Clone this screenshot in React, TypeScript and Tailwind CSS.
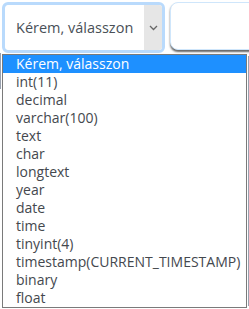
const options = [
  "Kérem, válasszon",
  "int(11)",
  "decimal",
  "varchar(100)",
  "text",
  "char",
  "longtext",
  "year",
  "date",
  "time",
  "tinyint(4)",
  "timestamp(CURRENT_TIMESTAMP)",
  "binary",
  "float",
];

export default function App() {
  return (
    <div className="relative w-[249px] h-[309px] bg-white overflow-hidden font-['Open_Sans',sans-serif]">
      {/* háttér elemek */}
      <div className="absolute left-0 top-[53px] w-[3px] h-[36px] border-l border-gray-400" />
      <div className="absolute right-0 top-[56px] w-[1px] h-[250px] bg-gray-400" />

      <div className="flex items-start gap-[5px] pt-[2px] pl-[2px]">
        {/* select */}
        <div className="flex w-[163px] h-[51px] rounded-[6px] border-[3px] border-[#b9dafc] bg-white overflow-hidden">
          <div className="flex-1 flex items-center pl-[11px] text-[14.5px] text-[#495057]">
            Kérem, válasszon
          </div>
          <div className="w-[18px] flex items-center justify-center bg-[#e6e6e6]">
            <svg width="9" height="6" viewBox="0 0 9 6" fill="none">
              <path d="M1 1l3.5 3.5L8 1" stroke="#666" strokeWidth="1.3" />
            </svg>
          </div>
        </div>
        {/* jobb oldali doboz */}
        <div className="flex-1 h-[48px] -mr-[20px] rounded-[8px] bg-white border border-[#cfe6fb] shadow-[0_2px_2px_rgba(0,0,0,0.6)]" />
      </div>

      {/* legördülő lista */}
      <ul className="absolute left-[2px] top-[54px] w-[245px] border border-[#7a7a7a] bg-white text-[14px] leading-[18px] text-[#44484e]">
        {options.map((o, i) => (
          <li
            key={o}
            className={
              i === 0
                ? "h-[18px] pl-[13px] bg-[#1e90ff] text-white font-medium whitespace-nowrap"
                : "h-[18px] pl-[13px] whitespace-nowrap"
            }
          >
            {o}
          </li>
        ))}
      </ul>
    </div>
  );
}
